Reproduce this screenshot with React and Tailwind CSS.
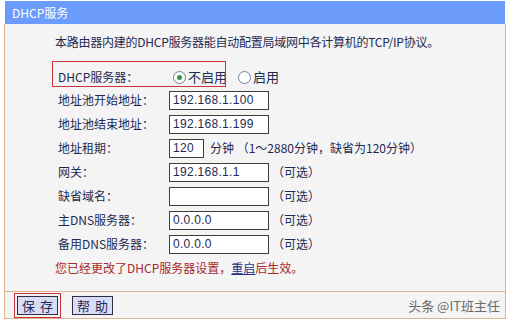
export default function App() {
  const cjk = { fontFamily: '"Noto Sans CJK SC", "Noto Sans", sans-serif' };
  const rows = [
    { label: "地址池开始地址：", value: "192.168.1.100", w: "w-[100px]" },
    { label: "地址池结束地址：", value: "192.168.1.199", w: "w-[100px]" },
    { label: "地址租期：", value: "120", w: "w-[35px]", note: "分钟 （1～2880分钟，缺省为120分钟）", noteGap: "ml-[6px]" },
    { label: "网关：", value: "192.168.1.1", w: "w-[100px]", note: "（可选）" },
    { label: "缺省域名：", value: "", w: "w-[100px]", note: "（可选）" },
    { label: "主DNS服务器：", value: "0.0.0.0", w: "w-[100px]", note: "（可选）" },
    { label: "备用DNS服务器：", value: "0.0.0.0", w: "w-[100px]", note: "（可选）" },
  ];
  return (
    <div className="w-[508px] h-[322px] bg-white overflow-hidden text-[12px] text-[#1e2a52]" style={cjk}>
      <div className="ml-[4px] pt-[1px] w-[502px]">
        <div className="ml-[1px] w-[500px] h-[23px] bg-[#6b9cfb] text-white pl-[7px] flex items-center leading-none">
          <span className="text-[12px]">DHCP服务</span>
        </div>
        <div className="border-x border-b border-[#dbb48e] bg-[#f4f4f4] h-[295px] flex flex-col">
          <div className="pl-[50px] pt-[10px] h-[26px] leading-[16px] text-[12px] tracking-[-0.25px]">
            本路由器内建的DHCP服务器能自动配置局域网中各计算机的TCP/IP协议。
          </div>
          <div className="mt-[16px] h-[22px] flex items-center relative">
            <div className="absolute left-[47px] top-[-5px] w-[174px] h-[26px] border border-[#c8323a]"></div>
            <div className="pl-[53px] w-[164px] leading-[16px]">DHCP服务器：</div>
            <div className="flex items-center ml-[4px]">
              <span className="w-[13px] h-[13px] rounded-full border border-[#6f7f99] bg-white flex items-center justify-center">
                <span className="w-[5px] h-[5px] rounded-full bg-[#2f9a3a]"></span>
              </span>
              <span className="ml-[2px] text-[13px] leading-[16px]">不启用</span>
              <span className="ml-[11px] w-[13px] h-[13px] rounded-full border border-[#6f7f99] bg-white"></span>
              <span className="ml-[2px] text-[13px] leading-[16px]">启用</span>
            </div>
          </div>
          {rows.map((r, i) => (
            <div key={i} className="h-[24px] flex items-center">
              <div className="pl-[53px] w-[164px] leading-[16px] text-[12px]">{r.label}</div>
              <div
                className={`${r.w} h-[19px] bg-white border border-[#3c3c3c] pl-[3px] flex items-center text-[12px] tracking-[0.3px] text-[#1e2a52]`}
                style={{ fontFamily: '"Liberation Sans", Arial, sans-serif' }}
              >
                {r.value}
              </div>
              {r.note && (
                <span className={`${r.noteGap || "ml-[3px]"} leading-[16px] text-[12px]`}>{r.note}</span>
              )}
            </div>
          ))}
          <div className="h-[24px] flex items-center pl-[50px] text-[12px] text-[#a8282c] leading-[16px]">
            您已经更改了DHCP服务器设置，<span className="text-[#1b2f8c] underline">重启</span>后生效。
          </div>
          <div className="mt-auto border-t border-[#dbb48e] h-[27px] flex items-center relative">
            <div className="ml-[9px] p-[2px] border border-[#c8323a]">
              <div className="w-[41px] h-[19px] bg-[#d9dcf6] border border-[#2e2e3e] flex items-center justify-center gap-[5px] text-[13px] leading-none">
                <span>保</span>
                <span>存</span>
              </div>
            </div>
            <div className="ml-[11px] w-[41px] h-[19px] bg-[#d9dcf6] border border-[#2e2e3e] flex items-center justify-center gap-[5px] text-[13px] leading-none">
              <span>帮</span>
              <span>助</span>
            </div>
            <div className="ml-auto mr-[5px] text-[13px] text-[#6a6a6a] leading-none">头条 @IT班主任</div>
          </div>
        </div>
      </div>
    </div>
  );
}
